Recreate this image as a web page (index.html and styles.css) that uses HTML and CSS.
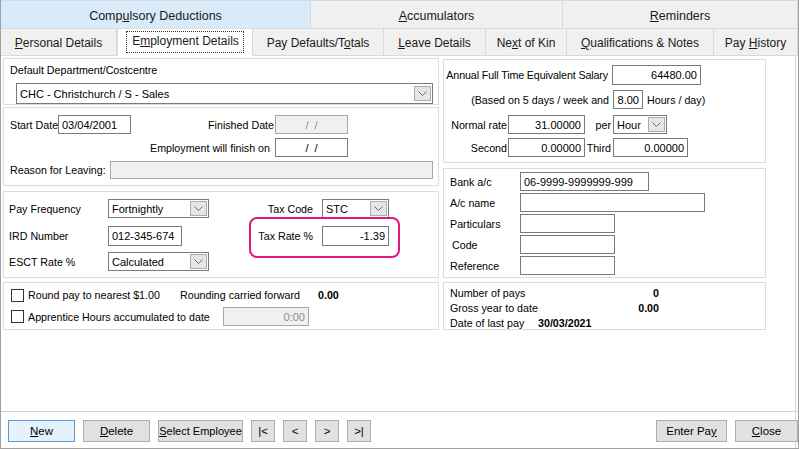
FILE: index.html
```html
<!DOCTYPE html>
<html>
<head>
<meta charset="utf-8">
<link rel="stylesheet" href="styles.css">
</head>
<body>
<div class="window">
  <div class="tabs1">
    <div class="t1 t1a"><span>Comp<u>u</u>lsory Deductions</span></div>
    <div class="t1 t1b"><span><u>A</u>ccumulators</span></div>
    <div class="t1 t1c"><span><u>R</u>eminders</span></div>
  </div>
  <div class="tabs2">
    <div class="t2 w-pd"><span><u>P</u>ersonal Details</span></div>
    <div class="t2 w-ed sel"><span class="focus">E<u>m</u>ployment Details</span></div>
    <div class="t2 w-pt"><span>Pay Defaults/T<u>o</u>tals</span></div>
    <div class="t2 w-ld"><span><u>L</u>eave Details</span></div>
    <div class="t2 w-nk"><span>Ne<u>x</u>t of Kin</span></div>
    <div class="t2 w-qn"><span><u>Q</u>ualifications &amp; Notes</span></div>
    <div class="t2 w-ph"><span>Pay <u>H</u>istory</span></div>
  </div>
  <div class="panel">
    <div class="cols">
      <div class="col">
        <div class="gb gb-l1">
          <div class="lbl-top">Default Department/Costcentre</div>
          <div class="sel-box w-dept">
            <span class="sel-text">CHC - Christchurch / S - Sales</span>
            <span class="arrow"><svg width="9" height="6" viewBox="0 0 9 6"><polyline points="0.5,0.5 4.5,4.5 8.5,0.5" fill="none" stroke="#6b6b6b" stroke-width="1"/></svg></span>
          </div>
        </div>
        <div class="gb gb-l2">
          <div class="row r-start">
            <span class="lbl w-start">Start Date</span>
            <span class="inp w73">03/04/2001</span>
            <span class="lbl ra w-fin"><span>Finished Date</span></span>
            <span class="inp w73 dis c">/ &nbsp;/</span>
          </div>
          <div class="row r-will">
            <span class="lbl ra w-will"><span>Employment will finish on</span></span>
            <span class="inp w73 c">/ &nbsp;/</span>
          </div>
          <div class="row r-reason">
            <span class="lbl w-reason">Reason for Leaving:</span>
            <span class="inp dis w-rl"></span>
          </div>
        </div>
        <div class="gb gb-l3">
          <div class="row r-pf">
            <span class="lbl w-pf">Pay Frequency</span>
            <div class="sel-box w101">
              <span class="sel-text">Fortnightly</span>
              <span class="arrow"><svg width="9" height="6" viewBox="0 0 9 6"><polyline points="0.5,0.5 4.5,4.5 8.5,0.5" fill="none" stroke="#6b6b6b" stroke-width="1"/></svg></span>
            </div>
            <span class="lbl ra w-tc"><span>Tax Code</span></span>
            <div class="sel-box w67">
              <span class="sel-text">STC</span>
              <span class="arrow"><svg width="9" height="6" viewBox="0 0 9 6"><polyline points="0.5,0.5 4.5,4.5 8.5,0.5" fill="none" stroke="#6b6b6b" stroke-width="1"/></svg></span>
            </div>
          </div>
          <div class="row r-ird">
            <span class="lbl w-pf">IRD Number</span>
            <span class="inp w74">012-345-674</span>
            <span class="lbl ra w-tr"><span>Tax Rate %</span></span>
            <span class="inp w67 r">-1.39</span>
          </div>
          <div class="row r-esct">
            <span class="lbl w-pf">ESCT Rate %</span>
            <div class="sel-box w101">
              <span class="sel-text">Calculated</span>
              <span class="arrow"><svg width="9" height="6" viewBox="0 0 9 6"><polyline points="0.5,0.5 4.5,4.5 8.5,0.5" fill="none" stroke="#6b6b6b" stroke-width="1"/></svg></span>
            </div>
          </div>
          <div class="highlight"></div>
        </div>
        <div class="gb gb-l4">
          <div class="row r-round">
            <span class="cb"></span>
            <span class="lbl w-round">Round pay to nearest $1.00</span>
            <span class="lbl w-rcf">Rounding carried forward</span>
            <span class="lbl b">0.00</span>
          </div>
          <div class="row r-appr">
            <span class="cb"></span>
            <span class="lbl w-appr">Apprentice Hours accumulated to date</span>
            <span class="inp dis r w86 grey">0:00</span>
          </div>
        </div>
      </div>
      <div class="col">
        <div class="gb gb-r1">
          <div class="row r-sal">
            <span class="lbl ra w-sal"><span class="tight">Annual Full Time Equivalent Salary</span></span>
            <span class="inp r w89">64480.00</span>
          </div>
          <div class="row r-based">
            <span class="lbl ra w-based"><span>(Based on 5 days / week and</span></span>
            <span class="inp r w30">8.00</span>
            <span class="lbl hrs">Hours / day)</span>
          </div>
          <div class="row r-rate">
            <span class="lbl ra w-nr"><span>Normal rate</span></span>
            <span class="inp r w77">31.00000</span>
            <span class="lbl ra w-per"><span>per</span></span>
            <div class="sel-box w54">
              <span class="sel-text">Hour</span>
              <span class="arrow"><svg width="9" height="6" viewBox="0 0 9 6"><polyline points="0.5,0.5 4.5,4.5 8.5,0.5" fill="none" stroke="#6b6b6b" stroke-width="1"/></svg></span>
            </div>
          </div>
          <div class="row r-second">
            <span class="lbl ra w-nr"><span>Second</span></span>
            <span class="inp r w77">0.00000</span>
            <span class="lbl ra w-per"><span>Third</span></span>
            <span class="inp r w75">0.00000</span>
          </div>
        </div>
        <div class="gb gb-r2">
          <div class="row brow"><span class="lbl w-bank">Bank a/c</span><span class="inp w129">06-9999-9999999-999</span></div>
          <div class="row brow"><span class="lbl w-bank">A/c name</span><span class="inp w185"></span></div>
          <div class="row brow"><span class="lbl w-bank">Particulars</span><span class="inp w95"></span></div>
          <div class="row brow"><span class="lbl w-bank code">Code</span><span class="inp w95"></span></div>
          <div class="row brow"><span class="lbl w-bank">Reference</span><span class="inp w95"></span></div>
        </div>
        <div class="gb gb-r3">
          <div class="srow"><span class="lbl">Number of pays</span><span class="b val">0</span></div>
          <div class="srow"><span class="lbl">Gross year to date</span><span class="b val">0.00</span></div>
          <div class="srow"><span class="lbl w-dlp">Date of last pay</span><span class="b">30/03/2021</span></div>
        </div>
      </div>
    </div>
    <div class="spacer"></div>
    <div class="footer">
      <div class="btns">
        <span class="btn btn-def w67b"><span><u>N</u>ew</span></span>
        <span class="btn w67b"><span><u>D</u>elete</span></span>
        <span class="btn w86b"><span><u>S</u>elect Employee</span></span>
        <span class="btn nav"><span>|&lt;</span></span>
        <span class="btn nav"><span>&lt;</span></span>
        <span class="btn nav"><span>&gt;</span></span>
        <span class="btn nav"><span>&gt;|</span></span>
      </div>
      <div class="btns">
        <span class="btn w71b"><span>Enter Pa<u>y</u></span></span>
        <span class="btn w63b"><span><u>C</u>lose</span></span>
      </div>
    </div>
  </div>
</div>
</body>
</html>
```
FILE: styles.css
```css
* { box-sizing: border-box; margin: 0; padding: 0; }
html, body { width: 799px; height: 449px; overflow: hidden; background: #fff; }
body { font-family: "Liberation Sans", Arial, sans-serif; font-size: 10.7px; color: #000; }
u { text-decoration: underline; text-underline-offset: 1px; }

.window {
  width: 799px; height: 449px;
  border-left: 1px solid #a0a0a0; border-right: 1px solid #a0a0a0; border-bottom: 1px solid #a0a0a0;
  display: flex; flex-direction: column; background: #fff;
}

.tabs1 { display: flex; height: 29px; }
.t1 {
  height: 29px; display: flex; align-items: center; justify-content: center;
  background: #f0f0f0; border: 1px solid #d9d9d9; border-left: none; font-size: 12.5px;
  color: #1a1a1a; white-space: nowrap; padding-top: 3px;
}
.t1a { width: 310px; background: #d9eaf8; border-color: #d0dde8; }
.t1b { width: 252px; }
.t1c { width: 235px; }

.tabs2 { display: flex; height: 27px; position: relative; z-index: 2; }
.t2 {
  height: 27px; display: flex; align-items: center; justify-content: center;
  background: #f0f0f0; border-right: 1px solid #d9d9d9; border-bottom: 1px solid #d9d9d9;
  font-size: 12px; color: #1a1a1a; padding-top: 2px; white-space: nowrap;
}
.t2.sel { background: #fff; border-bottom-color: #fff; height: 28px; margin-top: -1px; border-left: 1px solid #d9d9d9; border-top: 1px solid #d9d9d9; padding-top: 0; }
.focus { border: 1px dotted #333; padding: 2px 4px 3px 5px; line-height: 15px; }
.w-pd { width: 116px; }
.w-ed { width: 136px; }
.w-pt { width: 131px; }
.w-ld { width: 102px; }
.w-nk { width: 81px; }
.w-qn { width: 147px; }
.w-ph { width: 84px; }

.panel {
  width: 795px; flex: 1; border-right: 1px solid #d4d4d4;
  display: flex; flex-direction: column; margin-top: -1px;
}
.cols { display: grid; grid-template-columns: 436px 323px; column-gap: 4px; padding: 3px 0 0 2px; }
.col { display: flex; flex-direction: column; }

.gb { border: 1px solid #dcdcdc; background: #fff; position: relative; }
.gb-l1 { height: 47px; padding: 4px 0 0 6px; }
.gb-l2 { height: 79px; margin-top: 2px; padding: 7px 0 0 6px; }
.gb-l3 { height: 87px; margin-top: 5px; padding: 7px 0 0 5px; }
.gb-l4 { height: 48px; margin-top: 4px; padding: 2px 0 0 7px; }
.gb-r1 { height: 104px; margin-top: 1px; padding: 5px 0 0 0; }
.gb-r2 { height: 110px; margin-top: 5px; padding: 3px 0 0 6px; }
.gb-r3 { height: 48px; margin-top: 4px; padding: 2px 0 0 6px; }

.row { display: flex; align-items: center; height: 19px; }
.lbl { white-space: nowrap; flex: none; }
.ra { display: flex; justify-content: flex-end; }
.b { font-weight: bold; }
.tight { letter-spacing: -0.12px; }

.lbl-top { height: 15px; line-height: 15px; }
.inp {
  height: 19px; border: 1px solid #7a7a7a; background: #fff; flex: none;
  display: flex; align-items: center; padding: 0 3px; white-space: nowrap; font-size: 11px;
}
.inp.r { justify-content: flex-end; }
.inp.c { justify-content: center; }
.inp.dis { background: #f0f0f0; border-color: #a8a8a8; color: #8c8c8c; }
.inp.grey { color: #8c8c8c; }

.sel-box {
  height: 19px; border: 1px solid #7a7a7a; background: #fff; flex: none;
  display: flex; align-items: center; justify-content: space-between; padding: 0 1px 0 3px; font-size: 11px;
}
.arrow {
  width: 17px; height: 15px; background: #e6e6e6; border: 1px solid #acacac;
  display: flex; align-items: center; justify-content: center;
}

.w-dept { width: 417px; margin: 5px 0 0 6px; height: 21px; }
.w73 { width: 73px; }
.w74 { width: 74px; }
.w67 { width: 67px; }
.w101 { width: 101px; }
.w86 { width: 86px; }
.w89 { width: 89px; }
.w30 { width: 30px; }
.w77 { width: 77px; }
.w54 { width: 54px; }
.w75 { width: 75px; }
.w129 { width: 129px; }
.w185 { width: 185px; }
.w95 { width: 95px; }

/* L2 */
.w-start { width: 48px; }
.w-fin { width: 144px; padding-right: 1px; }
.r-will { margin-top: 4px; }
.w-will { width: 265px; padding-right: 5px; }
.r-reason { margin-top: 4px; height: 18px; }
.w-reason { width: 100px; }
.w-rl { width: 323px; height: 18px; }

/* L3 */
.w-pf { width: 99px; }
.w-tc { width: 113px; padding-right: 9px; }
.w-tr { width: 140px; padding-right: 9px; }
.r-ird { margin-top: 8px; height: 20px; }
.r-ird .inp { height: 20px; }
.r-esct { margin-top: 6px; }
.highlight {
  position: absolute; left: 245px; top: 25px; width: 151px; height: 41px;
  border: 2px solid #e2177c; border-radius: 8px;
}

/* L4 */
.cb { width: 13px; height: 13px; border: 1px solid #333; background: #fff; flex: none; margin-right: 4px; }
.r-round { height: 20px; }
.w-round { width: 152px; }
.w-rcf { width: 138px; }
.r-appr { margin-top: 2px; }
.w-appr { width: 195px; }

/* R1 */
.r-sal { height: 20px; }
.r-sal .inp { height: 20px; }
.w-sal { width: 168px; padding-right: 4px; }
.r-based { margin-top: 5px; }
.w-based { width: 169px; padding-right: 4px; }
.hrs { margin-left: 4px; }
.r-rate { margin-top: 6px; }
.r-second { margin-top: 4px; }
.w-nr { width: 64px; padding-right: 1px; }
.w-per { width: 28px; padding-right: 2px; }

/* R2 */
.brow { margin-bottom: 2px; }
.w-bank { width: 70px; }
.code { padding-left: 2px; }

/* R3 */
.srow { display: flex; height: 15px; align-items: center; width: 209px; justify-content: space-between; }
.srow:last-child { justify-content: flex-start; }
.w-dlp { width: 88px; }

.spacer { flex: 1; }
.footer {
  height: 37px; border-top: 1px solid #cfcfcf; display: flex; justify-content: space-between;
  padding: 8px 0 0 7px; width: 797px;
}
.btns { display: flex; gap: 8px; }
.btn {
  height: 22px; background: #e1e1e1; border: 1px solid #adadad; display: flex;
  align-items: center; justify-content: center; font-size: 11.5px; flex: none; white-space: nowrap;
}
.btn.w86b { font-size: 11px; }
.btn-def { background: #e5f1fb; border-color: #5b9bd5; }
.w67b { width: 67px; }
.w86b { width: 85px; }
.nav { width: 24px; }
.w71b { width: 71px; }
.w63b { width: 63px; }
```
